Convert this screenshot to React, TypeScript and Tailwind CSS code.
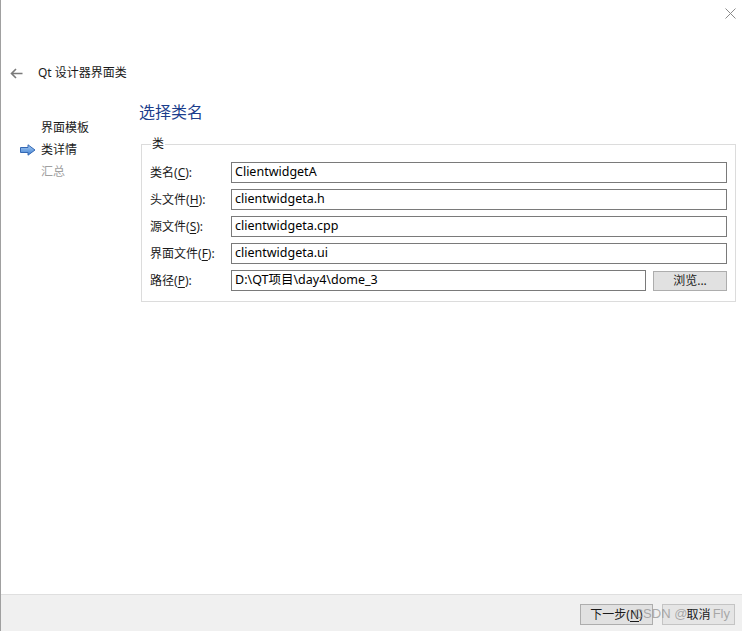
import React from "react";

const font = "font-['Noto_Sans','Noto_Sans_CJK_SC',sans-serif]";

const rows = [
  { label: "类名", key: "C", value: "ClientwidgetA" },
  { label: "头文件", key: "H", value: "clientwidgeta.h" },
  { label: "源文件", key: "S", value: "clientwidgeta.cpp" },
  { label: "界面文件", key: "F", value: "clientwidgeta.ui" },
];

const Label = ({ label, k }: { label: string; k: string }) => (
  <span className="w-[81px] shrink-0 text-[12px] text-[#1a1a1a]">
    {label}(<span className="underline underline-offset-2">{k}</span>):
  </span>
);

const Field = ({ value }: { value: string }) => (
  <div className="flex h-[21px] flex-1 items-center border border-[#7a7a7a] bg-white px-[3px] text-[12.5px] text-black">
    {value}
  </div>
);

const App = () => {
  return (
    <div
      className={`${font} relative flex h-[631px] w-[742px] flex-col overflow-hidden border-l border-[#a0a0a0] bg-white`}
    >
      {/* close */}
      <div className="flex h-[62px] justify-end pr-[6px] pt-[8px]">
        <svg width="11" height="11" viewBox="0 0 11 11">
          <path d="M0.5 0.5L10.5 10.5M10.5 0.5L0.5 10.5" stroke="#8a8a8a" strokeWidth="1" />
        </svg>
      </div>

      {/* title */}
      <div className="flex h-[22px] items-center">
        <svg width="13" height="11" viewBox="0 0 13 11" className="ml-[9px]">
          <path d="M12.5 5.5H1.5M6 1L1.5 5.5L6 10" fill="none" stroke="#7a7a7a" strokeWidth="1.6" />
        </svg>
        <span className="ml-[15px] text-[12px] text-[#1a1a1a]">Qt 设计器界面类</span>
      </div>

      {/* body */}
      <div className="mt-[16px] flex">
        <div className="w-[138px] shrink-0 pt-[17px]">
          <div className="flex h-[22px] items-center pl-[40px] text-[12px] text-[#1a1a1a]">界面模板</div>
          <div className="flex h-[22px] items-center text-[12px] text-[#1a1a1a]">
            <svg width="16" height="12" viewBox="0 0 16 12" className="ml-[19px] mr-[5px]">
              <defs>
                <linearGradient id="ar" x1="0" y1="0" x2="0" y2="1">
                  <stop offset="0" stopColor="#a9cdf5" />
                  <stop offset="1" stopColor="#3f7fd0" />
                </linearGradient>
              </defs>
              <path d="M0.5 3.5H8V0.8L15 6L8 11.2V8.5H0.5Z" fill="url(#ar)" stroke="#3468b4" strokeWidth="1" />
            </svg>
            类详情
          </div>
          <div className="flex h-[22px] items-center pl-[40px] text-[12px] text-[#a0a0a0]">汇总</div>
        </div>

        <div className="mr-[6px] flex flex-1 flex-col">
          <h1 className="flex h-[24px] items-center text-[16px] text-[#1b3d8c]">选择类名</h1>
          <fieldset className="ml-[2px] mt-[12px] border border-[#dcdcdc] px-[8px] pb-[10px]">
            <legend className="ml-[1px] px-[1px] text-[12px] leading-[16px] text-[#1a1a1a]">类</legend>
            <div className="mt-[10px] flex flex-col gap-[6px]">
              {rows.map((r) => (
                <div key={r.key} className="flex items-center">
                  <Label label={r.label} k={r.key} />
                  <Field value={r.value} />
                </div>
              ))}
              <div className="flex items-center">
                <Label label="路径" k="P" />
                <Field value="D:\QT项目\day4\dome_3" />
                <button className="ml-[7px] h-[20px] w-[74px] border border-[#adadad] bg-[#e1e1e1] text-[12px] text-[#1a1a1a]">
                  浏览...
                </button>
              </div>
            </div>
          </fieldset>
        </div>
      </div>

      {/* footer */}
      <div className="mt-auto flex h-[37px] justify-end gap-[9px] border-t border-[#dfdfdf] bg-[#f0f0f0] pr-[7px] pt-[9px]">
        <button className="h-[21px] w-[73px] border border-[#adadad] bg-[#e1e1e1] text-[12px] text-[#1a1a1a]">
          下一步(<span className="underline underline-offset-2">N</span>)
        </button>
        <button className="h-[21px] w-[73px] border border-[#c4c4c4] bg-[#e5e5e5] text-[12px] text-[#1a1a1a]">
          取消
        </button>
      </div>

      {/* watermark */}
      <span className="absolute bottom-[8px] right-[12px] font-['Liberation_Sans',sans-serif] text-[13px] text-[#8c8c8c]/70">
        CSDN @&nbsp;&nbsp;&nbsp;&nbsp;&nbsp;&nbsp;&nbsp;Fly
      </span>
    </div>
  );
};

export default App;
